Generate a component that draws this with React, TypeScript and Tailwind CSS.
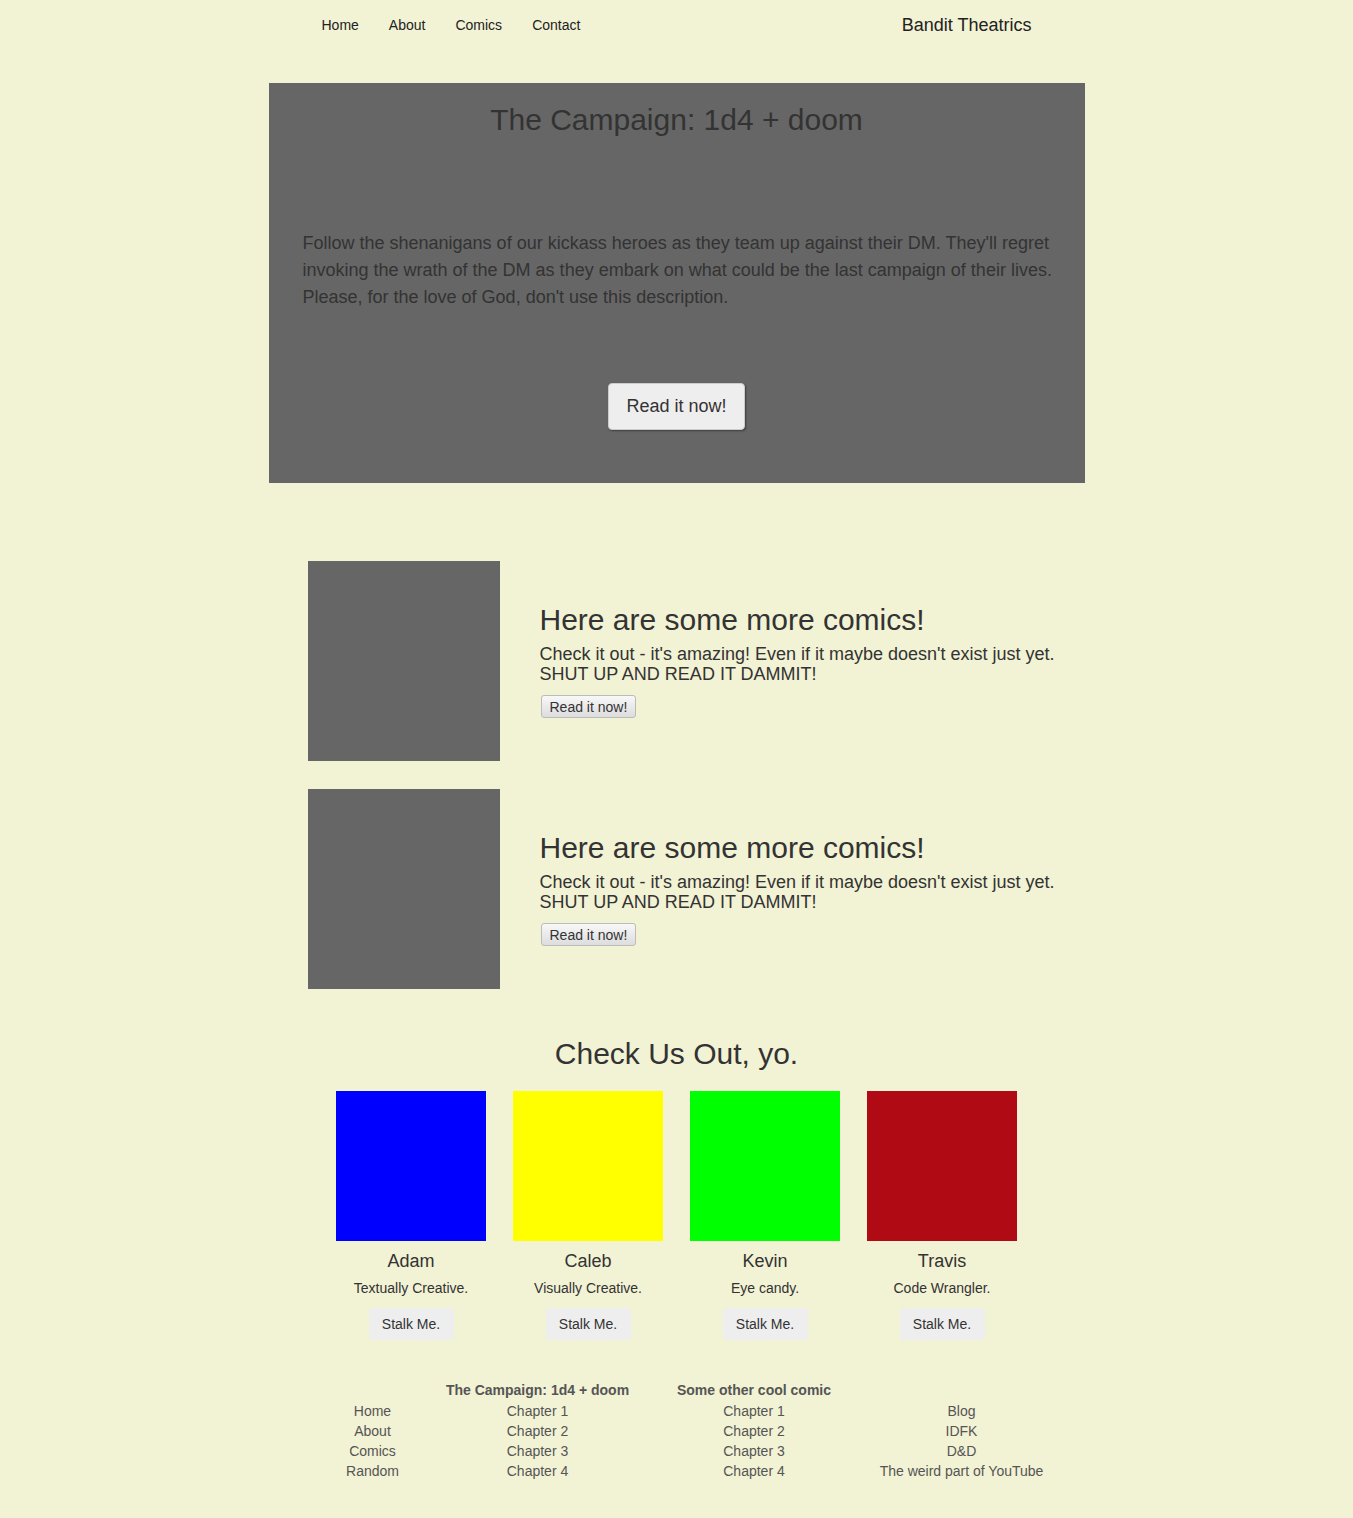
import React from 'react';

const comics = [
  { title: 'Here are some more comics!' },
  { title: 'Here are some more comics!' },
];

const crew = [
  { name: 'Adam', role: 'Textually Creative.', color: 'bg-[#0000ff]' },
  { name: 'Caleb', role: 'Visually Creative.', color: 'bg-[#ffff00]' },
  { name: 'Kevin', role: 'Eye candy.', color: 'bg-[#00ff00]' },
  { name: 'Travis', role: 'Code Wrangler.', color: 'bg-[#b00b14]' },
];

const footerCols = [
  { head: '', links: ['Home', 'About', 'Comics', 'Random'] },
  { head: 'The Campaign: 1d4 + doom', links: ['Chapter 1', 'Chapter 2', 'Chapter 3', 'Chapter 4'] },
  { head: 'Some other cool comic', links: ['Chapter 1', 'Chapter 2', 'Chapter 3', 'Chapter 4'] },
  { head: '', links: ['Blog', 'IDFK', 'D&D', 'The weird part of YouTube'] },
];

function NavBar() {
  return (
    <nav className="mx-auto flex h-[50px] w-[816px] items-center justify-between text-[#222]">
      <ul className="ml-[53px] flex gap-[30px] text-[14px]">
        <li>Home</li>
        <li>About</li>
        <li>Comics</li>
        <li>Contact</li>
      </ul>
      <span className="mr-[53px] text-[18px]">Bandit Theatrics</span>
    </nav>
  );
}

function Jumbotron() {
  return (
    <section className="mx-auto mt-[33px] flex h-[400px] w-[816px] flex-col bg-[#666666] pl-[34px] pr-[18px] pt-[20px] text-[#333]">
      <h1 className="pr-[16px] text-center text-[30px] leading-[1.1]">The Campaign: 1d4 + doom</h1>
      <p className="mt-[94px] text-[18px] leading-[27px]">
        Follow the shenanigans of our kickass heroes as they team up against their DM. They'll regret invoking the wrath
        of the DM as they embark on what could be the last campaign of their lives. Please, for the love of God, don't use
        this description.
      </p>
      <div className="mt-[72px] flex justify-center pr-[16px]">
        <button className="h-[47px] rounded-[4px] border border-[#ccc] bg-[#eeeeee] px-[17px] text-[18px] text-[#333] shadow-[1px_1px_2px_rgba(0,0,0,0.4)]">
          Read it now!
        </button>
      </div>
    </section>
  );
}

function ComicRow({ title }: { title: string }) {
  return (
    <div className="flex items-center gap-[40px]">
      <div className="h-[200px] w-[192px] shrink-0 bg-[#666666]" />
      <div className="text-[#333]">
        <h2 className="text-[30px] leading-[1.1]">{title}</h2>
        <p className="mt-[8px] text-[18px] leading-[20px]">
          Check it out - it's amazing! Even if it maybe doesn't exist just yet.
          <br />
          SHUT UP AND READ IT DAMMIT!
        </p>
        <button className="ml-px mt-[11px] h-[23px] rounded-[3px] border border-[#bbb] bg-gradient-to-b from-[#f8f8f8] to-[#dddddd] px-[8px] text-[14px] leading-none text-[#333]">
          Read it now!
        </button>
      </div>
    </div>
  );
}

function Crew() {
  return (
    <section className="mt-[48px] text-[#333]">
      <h2 className="text-center text-[30px] leading-[1.1]">Check Us Out, yo.</h2>
      <div className="mx-auto mt-[21px] grid w-[681px] grid-cols-4 gap-[27px]">
        {crew.map((c) => (
          <div key={c.name} className="flex flex-col items-center">
            <div className={`h-[150px] w-[150px] ${c.color}`} />
            <h3 className="mt-[9px] text-[18px] leading-[22px]">{c.name}</h3>
            <p className="mt-[6px] text-[14px] leading-[20px]">{c.role}</p>
            <button className="mt-[10px] h-[32px] w-[85px] rounded-[4px] bg-[#eeeeee] text-[14px] text-[#333]">
              Stalk Me.
            </button>
          </div>
        ))}
      </div>
    </section>
  );
}

function Footer() {
  return (
    <footer className="mx-auto mt-[40px] w-[816px] pb-[37px] text-[14px] leading-[20px] text-[#555]">
      <div className="ml-[55px] grid grid-cols-[98px_232px_201px_214px] text-center">
        {footerCols.map((col, i) => (
          <div key={i} className="flex flex-col">
            <div className="h-[21px] font-bold">{col.head}</div>
            {col.links.map((link) => (
              <a key={link} className="whitespace-nowrap">
                {link}
              </a>
            ))}
          </div>
        ))}
      </div>
    </footer>
  );
}

export default function App() {
  return (
    <div className="min-h-[1518px] bg-[#f2f2d4] font-['Liberation_Sans',Arial,sans-serif]">
      <NavBar />
      <Jumbotron />
      <div className="mx-auto mt-[78px] flex w-[816px] flex-col gap-[28px] pl-[39px]">
        {comics.map((c, i) => (
          <ComicRow key={i} title={c.title} />
        ))}
      </div>
      <Crew />
      <Footer />
    </div>
  );
}
